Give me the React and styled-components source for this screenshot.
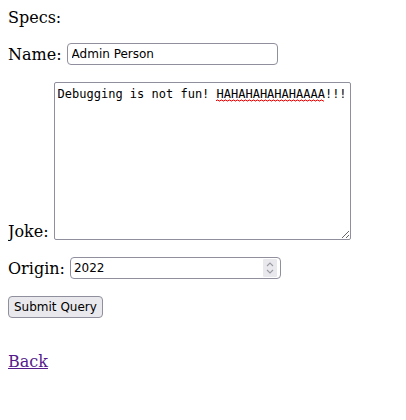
import React from "react";
import styled, { createGlobalStyle } from "styled-components";

const Global = createGlobalStyle`
  body {
    margin: 8px;
    font-family: "DejaVu Serif", serif;
    font-size: 16px;
    line-height: 19px;
    color: #000;
    background: #fff;
  }
`;

const Form = styled.form`
  display: flex;
  flex-direction: column;
  align-items: flex-start;
  margin: 0;
`;

const Heading = styled.div`
  height: 19px;
`;

const Row = styled.div`
  display: flex;
  align-items: ${(p) => (p.$bottom ? "flex-end" : "center")};
  gap: 5px;
  margin-top: ${(p) => p.$top}px;
`;

const Label = styled.label`
  line-height: 19px;
  margin-bottom: ${(p) => (p.$bottom ? "-1px" : "0")};
`;

const fieldBorder = "#8f8f9d";

const TextInput = styled.input`
  box-sizing: border-box;
  width: 211px;
  height: 22px;
  margin: 0;
  padding: 0 4px;
  border: 1px solid ${fieldBorder};
  border-radius: 4px;
  background: #fff;
  font-family: "DejaVu Sans", sans-serif;
  font-size: 12px;
  color: #000;
  outline: none;
`;

const squiggle = encodeURIComponent(
  '<svg xmlns="http://www.w3.org/2000/svg" width="4" height="3"><path d="M0 2 L1 1 L2 1 L3 2 L4 2" fill="none" stroke="#e00" stroke-width="1"/></svg>'
);

const JokeArea = styled.textarea`
  box-sizing: border-box;
  width: 297px;
  height: 158px;
  margin: 0;
  padding: 4px 3px 2px 3px;
  border: 1px solid ${fieldBorder};
  border-radius: 2px;
  font-family: "DejaVu Sans Mono", monospace;
  font-size: 12px;
  line-height: 15px;
  color: #000;
  background: #fff;
  outline: none;
  overflow: hidden;
`;

const TextareaFrame = styled.div`
  position: relative;
  display: flex;
`;

const Squiggle = styled.span`
  position: absolute;
  left: 162px;
  top: 17px;
  width: 108px;
  height: 3px;
  background-image: url("data:image/svg+xml,${squiggle}");
  background-repeat: repeat-x;
  background-size: 4px 3px;
  pointer-events: none;
`;

const NumberBox = styled.div`
  box-sizing: border-box;
  display: flex;
  align-items: center;
  width: 211px;
  height: 22px;
  padding: 0 3px 0 0;
  border: 1px solid ${fieldBorder};
  border-radius: 4px;
  background: #fff;
`;

const NumberInput = styled.input`
  flex: 1;
  min-width: 0;
  height: 100%;
  margin: 0;
  padding: 0 3px;
  border: none;
  background: transparent;
  font-family: "DejaVu Sans", sans-serif;
  font-size: 12px;
  color: #000;
  outline: none;
  -moz-appearance: textfield;
  &::-webkit-inner-spin-button,
  &::-webkit-outer-spin-button {
    -webkit-appearance: none;
    margin: 0;
  }
`;

const Spinner = styled.div`
  display: flex;
  flex-direction: column;
  align-items: center;
  justify-content: center;
  gap: 2px;
  width: 14px;
  height: 18px;
  background: #e9e9ed;
  border-radius: 1px;
`;

const SubmitButton = styled.button`
  box-sizing: border-box;
  height: 22px;
  margin: 0;
  padding: 0 5px;
  border: 1px solid ${fieldBorder};
  border-radius: 4px;
  background: #e9e9ed;
  font-family: "DejaVu Sans", sans-serif;
  font-size: 12px;
  color: #000;
`;

const BackLink = styled.a`
  margin-top: 34px;
  color: #551a8b;
  text-decoration: underline;
`;

const Chevron = ({ up }) => (
  <svg width="8" height="5" viewBox="0 0 8 5">
    <path
      d={up ? "M1 4 L4 1 L7 4" : "M1 1 L4 4 L7 1"}
      fill="none"
      stroke="#9a9aa4"
      strokeWidth="1.1"
    />
  </svg>
);

export default function App() {
  return (
    <>
      <Global />
      <Form onSubmit={(e) => e.preventDefault()}>
        <Heading>Specs:</Heading>
        <Row $top={16}>
          <Label htmlFor="name">Name:</Label>
          <TextInput type="text" id="name" defaultValue="Admin Person" />
        </Row>
        <Row $top={17} $bottom>
          <Label htmlFor="joke" $bottom>
            Joke:
          </Label>
          <TextareaFrame>
            <JokeArea
              id="joke"
              spellCheck={false}
              defaultValue="Debugging is not fun! HAHAHAHAHAHAAAA!!!"
            />
            <Squiggle />
          </TextareaFrame>
        </Row>
        <Row $top={17}>
          <Label htmlFor="origin">Origin:</Label>
          <NumberBox>
            <NumberInput type="number" id="origin" defaultValue="2022" />
            <Spinner>
              <Chevron up />
              <Chevron />
            </Spinner>
          </NumberBox>
        </Row>
        <Row $top={17}>
          <SubmitButton type="submit">Submit Query</SubmitButton>
        </Row>
        <BackLink href="#">Back</BackLink>
      </Form>
    </>
  );
}
